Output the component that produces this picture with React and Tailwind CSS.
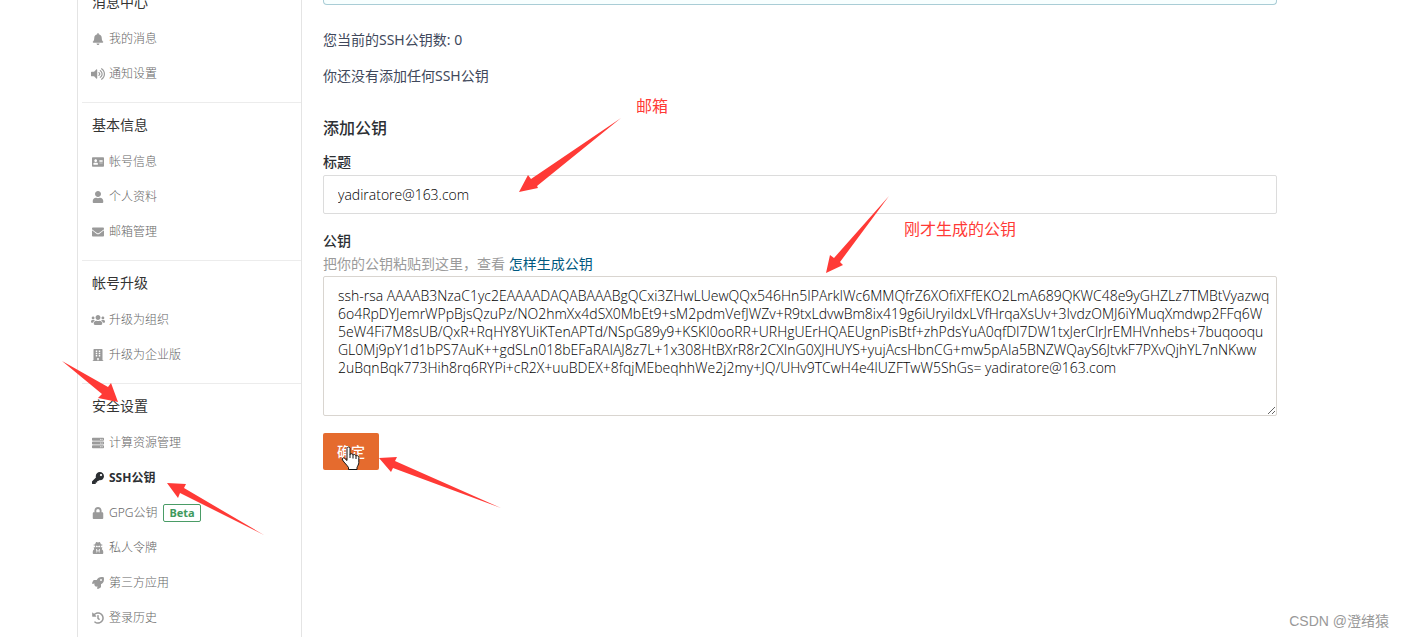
import {
  FaAddressCard,
  FaBell,
  FaBuilding,
  FaEnvelope,
  FaHistory,
  FaKey,
  FaLock,
  FaRocket,
  FaServer,
  FaUser,
  FaUsers,
  FaUserSecret,
  FaVolumeUp,
} from 'react-icons/fa';

const sections = [
  {
    title: '消息中心',
    items: [
      { label: '我的消息', icon: FaBell },
      { label: '通知设置', icon: FaVolumeUp, wide: true },
    ],
  },
  {
    title: '基本信息',
    items: [
      { label: '帐号信息', icon: FaAddressCard },
      { label: '个人资料', icon: FaUser },
      { label: '邮箱管理', icon: FaEnvelope },
    ],
  },
  {
    title: '帐号升级',
    items: [
      { label: '升级为组织', icon: FaUsers, wide: true },
      { label: '升级为企业版', icon: FaBuilding },
    ],
  },
  {
    title: '安全设置',
    items: [
      { label: '计算资源管理', icon: FaServer },
      { label: 'SSH公钥', icon: FaKey, active: true },
      { label: 'GPG公钥', icon: FaLock, badge: 'Beta' },
      { label: '私人令牌', icon: FaUserSecret },
      { label: '第三方应用', icon: FaRocket },
      { label: '登录历史', icon: FaHistory },
    ],
  },
];

const publicKey = [
  'ssh-rsa AAAAB3NzaC1yc2EAAAADAQABAAABgQCxi3ZHwLUewQQx546Hn5IPArkIWc6MMQfrZ6XOfiXFfEKO2LmA689QKWC48e9yGHZLz7TMBtVyazwq',
  '6o4RpDYJemrWPpBjsQzuPz/NO2hmXx4dSX0MbEt9+sM2pdmVefJWZv+R9txLdvwBm8ix419g6iUryiIdxLVfHrqaXsUv+3IvdzOMJ6iYMuqXmdwp2FFq6W',
  '5eW4Fi7M8sUB/QxR+RqHY8YUiKTenAPTd/NSpG89y9+KSKI0ooRR+URHgUErHQAEUgnPisBtf+zhPdsYuA0qfDI7DW1txJerClrJrEMHVnhebs+7buqooqu',
  'GL0Mj9pY1d1bPS7AuK++gdSLn018bEFaRAIAJ8z7L+1x308HtBXrR8r2CXInG0XJHUYS+yujAcsHbnCG+mw5pAIa5BNZWQayS6JtvkF7PXvQjhYL7nNKww',
  '2uBqnBqk773Hih8rq6RYPi+cR2X+uuBDEX+8fqjMEbeqhhWe2j2my+JQ/UHv9TCwH4e4lUZFTwW5ShGs= yadiratore@163.com',
].join('\n');

function NavItem({ label, icon: Icon, active, badge, wide }) {
  return (
    <li>
      <a
        href="#"
        className={`flex h-[35px] items-center gap-1 text-xs ${active ? 'font-bold text-[#2c2f33]' : 'font-light text-[#666666]'}`}
      >
        <span className={`flex w-3.5 justify-center ${active ? 'text-[#2c2f33]' : 'text-[#9a9a9a]'}`}>
          <Icon size={wide ? 14 : 12} />
        </span>
        {label}
        {badge && (
          <span className="ml-0.5 rounded-xs border border-[#4a9c66] px-[5px] text-[11px] leading-4 font-bold text-[#3f9a5e]">
            {badge}
          </span>
        )}
      </a>
    </li>
  );
}

function Sidebar() {
  return (
    <aside className="w-[225px] shrink-0 overflow-hidden border-x border-[#e4e4e4]">
      <nav className="-mt-[21px]">
        {sections.map((section) => (
          <section key={section.title} className="ml-1 border-t border-[#ececec] pt-1 pb-[11px] pl-[9px]">
            <h3 className="mb-px flex h-9 items-center pl-px text-sm text-[#333333]">{section.title}</h3>
            <ul>
              {section.items.map((item) => (
                <NavItem key={item.label} {...item} />
              ))}
            </ul>
          </section>
        ))}
      </nav>
    </aside>
  );
}

// red arrows, notes and the hand pointer drawn over the page
function Annotations() {
  return (
    <div className="pointer-events-none absolute inset-0 text-base text-[#ff3a36]">
      <svg className="absolute top-0 left-0" width="1277" height="637" fill="#ff3a36" aria-hidden="true">
        <path d="M62 361 L108 387 L111 383 L118 402 L98 398 L102 394 Z" />
        <path d="M167 483 L186 484 L184 488 L264 535 L180 493 L178 498 Z" />
        <path d="M621 118 L537 186 L538 188 L519 192 L528 175 L531 179 Z" />
        <path d="M889 196 L840 262 L843 265 L826 273 L830 255 L834 258 Z" />
        <path d="M379 458 L397 457 L395 461 L501 508 L393 468 L391 472 Z" />
      </svg>
      <span className="absolute top-[94px] left-[636px]">邮箱</span>
      <span className="absolute top-[217px] left-[904px]">刚才生成的公钥</span>
      <svg className="absolute top-[446px] left-[341px]" width="20" height="25" viewBox="0 0 20 25" aria-hidden="true">
        <path
          d="M6 2.5c0-2 3-2 3 0v6c.5-1.2 3-1 3 .6.6-1 3-.8 3 .9.8-.8 2.8-.3 2.8 1.500v5c0 2-1.300 3.500-1.800 5V23.500H7.500V21.500C6 19 3.500 17 1.500 14c-1-1.600.8-2.800 2.200-1.600L6 14.500z"
          fill="#fff"
          stroke="#111"
          strokeLinejoin="round"
        />
        <path d="M9 8v4M12 9v3.5M15 10v3" stroke="#111" fill="none" />
      </svg>
    </div>
  );
}

export default function App() {
  return (
    <div className="relative flex h-screen overflow-hidden bg-white pr-[127px] pl-[77px] font-['Noto_Sans','Noto_Sans_CJK_SC',sans-serif] text-sm text-[#40485b]">
      <Sidebar />
      <main className="min-w-0 flex-1 pl-[21px]">
        <div className="h-[5px] rounded-b-sm border border-t-0 border-[#a9cdd6] bg-[#f8ffff]" />
        <p className="mt-[25px] leading-5">您当前的SSH公钥数: 0</p>
        <p className="mt-4 leading-5">你还没有添加任何SSH公钥</p>

        <h2 className="mt-8 text-base leading-5 font-medium text-[#2c2f33]">添加公钥</h2>
        <form onSubmit={(e) => e.preventDefault()}>
          <label htmlFor="title" className="mt-3.5 block leading-5 font-medium text-[#2c2f33]">
            标题
          </label>
          <input
            id="title"
            type="text"
            defaultValue="yadiratore@163.com"
            className="mt-[3px] block h-[39px] w-full rounded-xs border border-[#dcdcdc] px-3.5 font-['Open_Sans',sans-serif] text-sm font-light text-black outline-none"
          />
          <label htmlFor="key" className="mt-[17px] block leading-5 font-medium text-[#2c2f33]">
            公钥
          </label>
          <p className="mt-[3px] leading-5 text-[#9b9b9b]">
            把你的公钥粘贴到这里，查看{' '}
            <a href="#" className="text-[#005980]">
              怎样生成公钥
            </a>
          </p>
          <textarea
            id="key"
            defaultValue={publicKey}
            spellCheck={false}
            className="mt-0.5 block h-[140px] w-full overflow-hidden rounded-xs border border-[#d9d5d0] py-2.5 pr-1 pl-3.5 font-['Open_Sans',sans-serif] text-sm leading-[18px] font-light whitespace-pre text-black outline-none"
          />
          <button type="submit" className="mt-[17px] h-[37px] w-14 rounded-xs bg-[#e56b2e] font-medium text-white">
            确定
          </button>
        </form>
      </main>
      <Annotations />
      <p className="absolute right-[15px] bottom-1.5 font-['Liberation_Sans','Noto_Sans_CJK_SC',sans-serif] leading-5 text-[#999999]">
        CSDN @澄绪猿
      </p>
    </div>
  );
}
